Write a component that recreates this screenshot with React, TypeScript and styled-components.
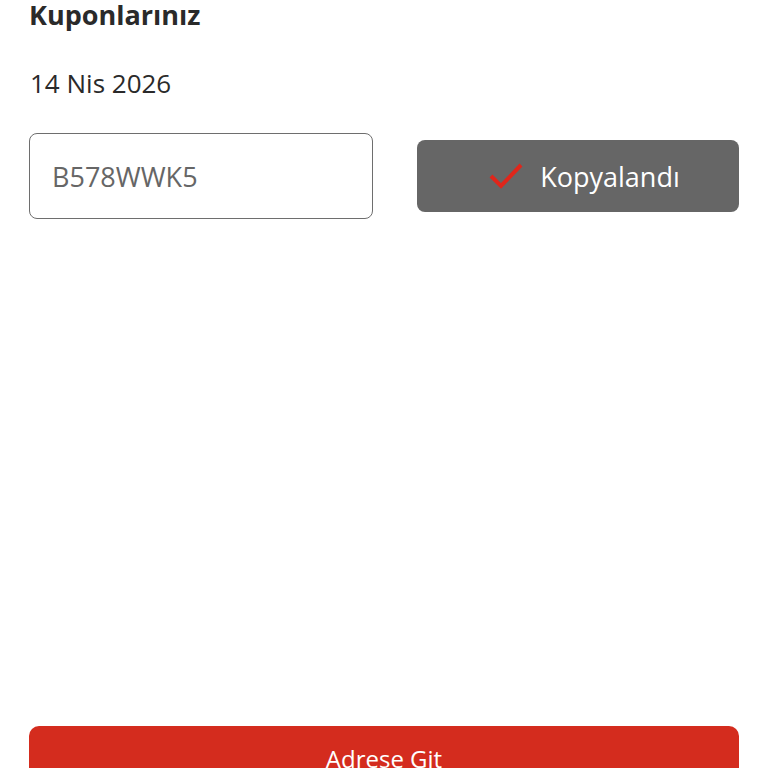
import React from "react";
import styled, { createGlobalStyle } from "styled-components";

const Global = createGlobalStyle`
  html, body {
    margin: 0;
    padding: 0;
    background: #ffffff;
    overflow: hidden;
  }
  body {
    font-family: "Open Sans", "Noto Sans", sans-serif;
    color: #333333;
  }
`;

const Page = styled.main`
  height: 768px;
  box-sizing: border-box;
  padding: 0 29px;
  display: flex;
  flex-direction: column;
`;

const Title = styled.h1`
  margin: 0;
  font-size: 27px;
  line-height: 30px;
  font-weight: 700;
  color: #2a2a2a;
`;

const DateText = styled.p`
  margin: 35px 0 0;
  font-size: 26px;
  line-height: 36px;
  font-weight: 400;
  color: #2a2a2a;
  padding-left: 1px;
`;

const CouponRow = styled.div`
  margin-top: 32px;
  display: flex;
  align-items: center;
  gap: 44px;
`;

const CodeBox = styled.div`
  box-sizing: border-box;
  width: 344px;
  height: 86px;
  border: 1.5px solid #6e6e6e;
  border-radius: 8px;
  display: flex;
  align-items: center;
  padding-left: 22px;
  font-size: 27px;
  color: #666666;
`;

const CopiedButton = styled.button`
  flex: 1;
  height: 72px;
  border: none;
  border-radius: 8px;
  background: #666666;
  color: #ffffff;
  font-family: inherit;
  font-size: 27px;
  display: flex;
  align-items: center;
  justify-content: center;
  gap: 16px;
  padding: 0 0 0 12px;
`;

const Spacer = styled.div`
  flex: 1;
`;

const PrimaryButton = styled.button`
  flex: none;
  height: 72px;
  margin-bottom: -30px;
  border: none;
  border-radius: 10px;
  background: #d42c1e;
  color: #ffffff;
  font-family: inherit;
  font-size: 24px;
  display: flex;
  align-items: flex-start;
  justify-content: center;
  padding-top: 16px;
`;

const Check = () => (
  <svg width="36" height="28" viewBox="0 0 36 28" aria-hidden="true">
    <path
      d="M3 14 L13 24 L33 3"
      fill="none"
      stroke="#e0261b"
      strokeWidth="4"
      strokeLinecap="butt"
      strokeLinejoin="miter"
    />
  </svg>
);

export default function App() {
  return (
    <>
      <Global />
      <Page>
        <Title>Kuponlarınız</Title>
        <DateText>14 Nis 2026</DateText>
        <CouponRow>
          <CodeBox>B578WWK5</CodeBox>
          <CopiedButton>
            <Check />
            Kopyalandı
          </CopiedButton>
        </CouponRow>
        <Spacer />
        <PrimaryButton>Adrese Git</PrimaryButton>
      </Page>
    </>
  );
}
